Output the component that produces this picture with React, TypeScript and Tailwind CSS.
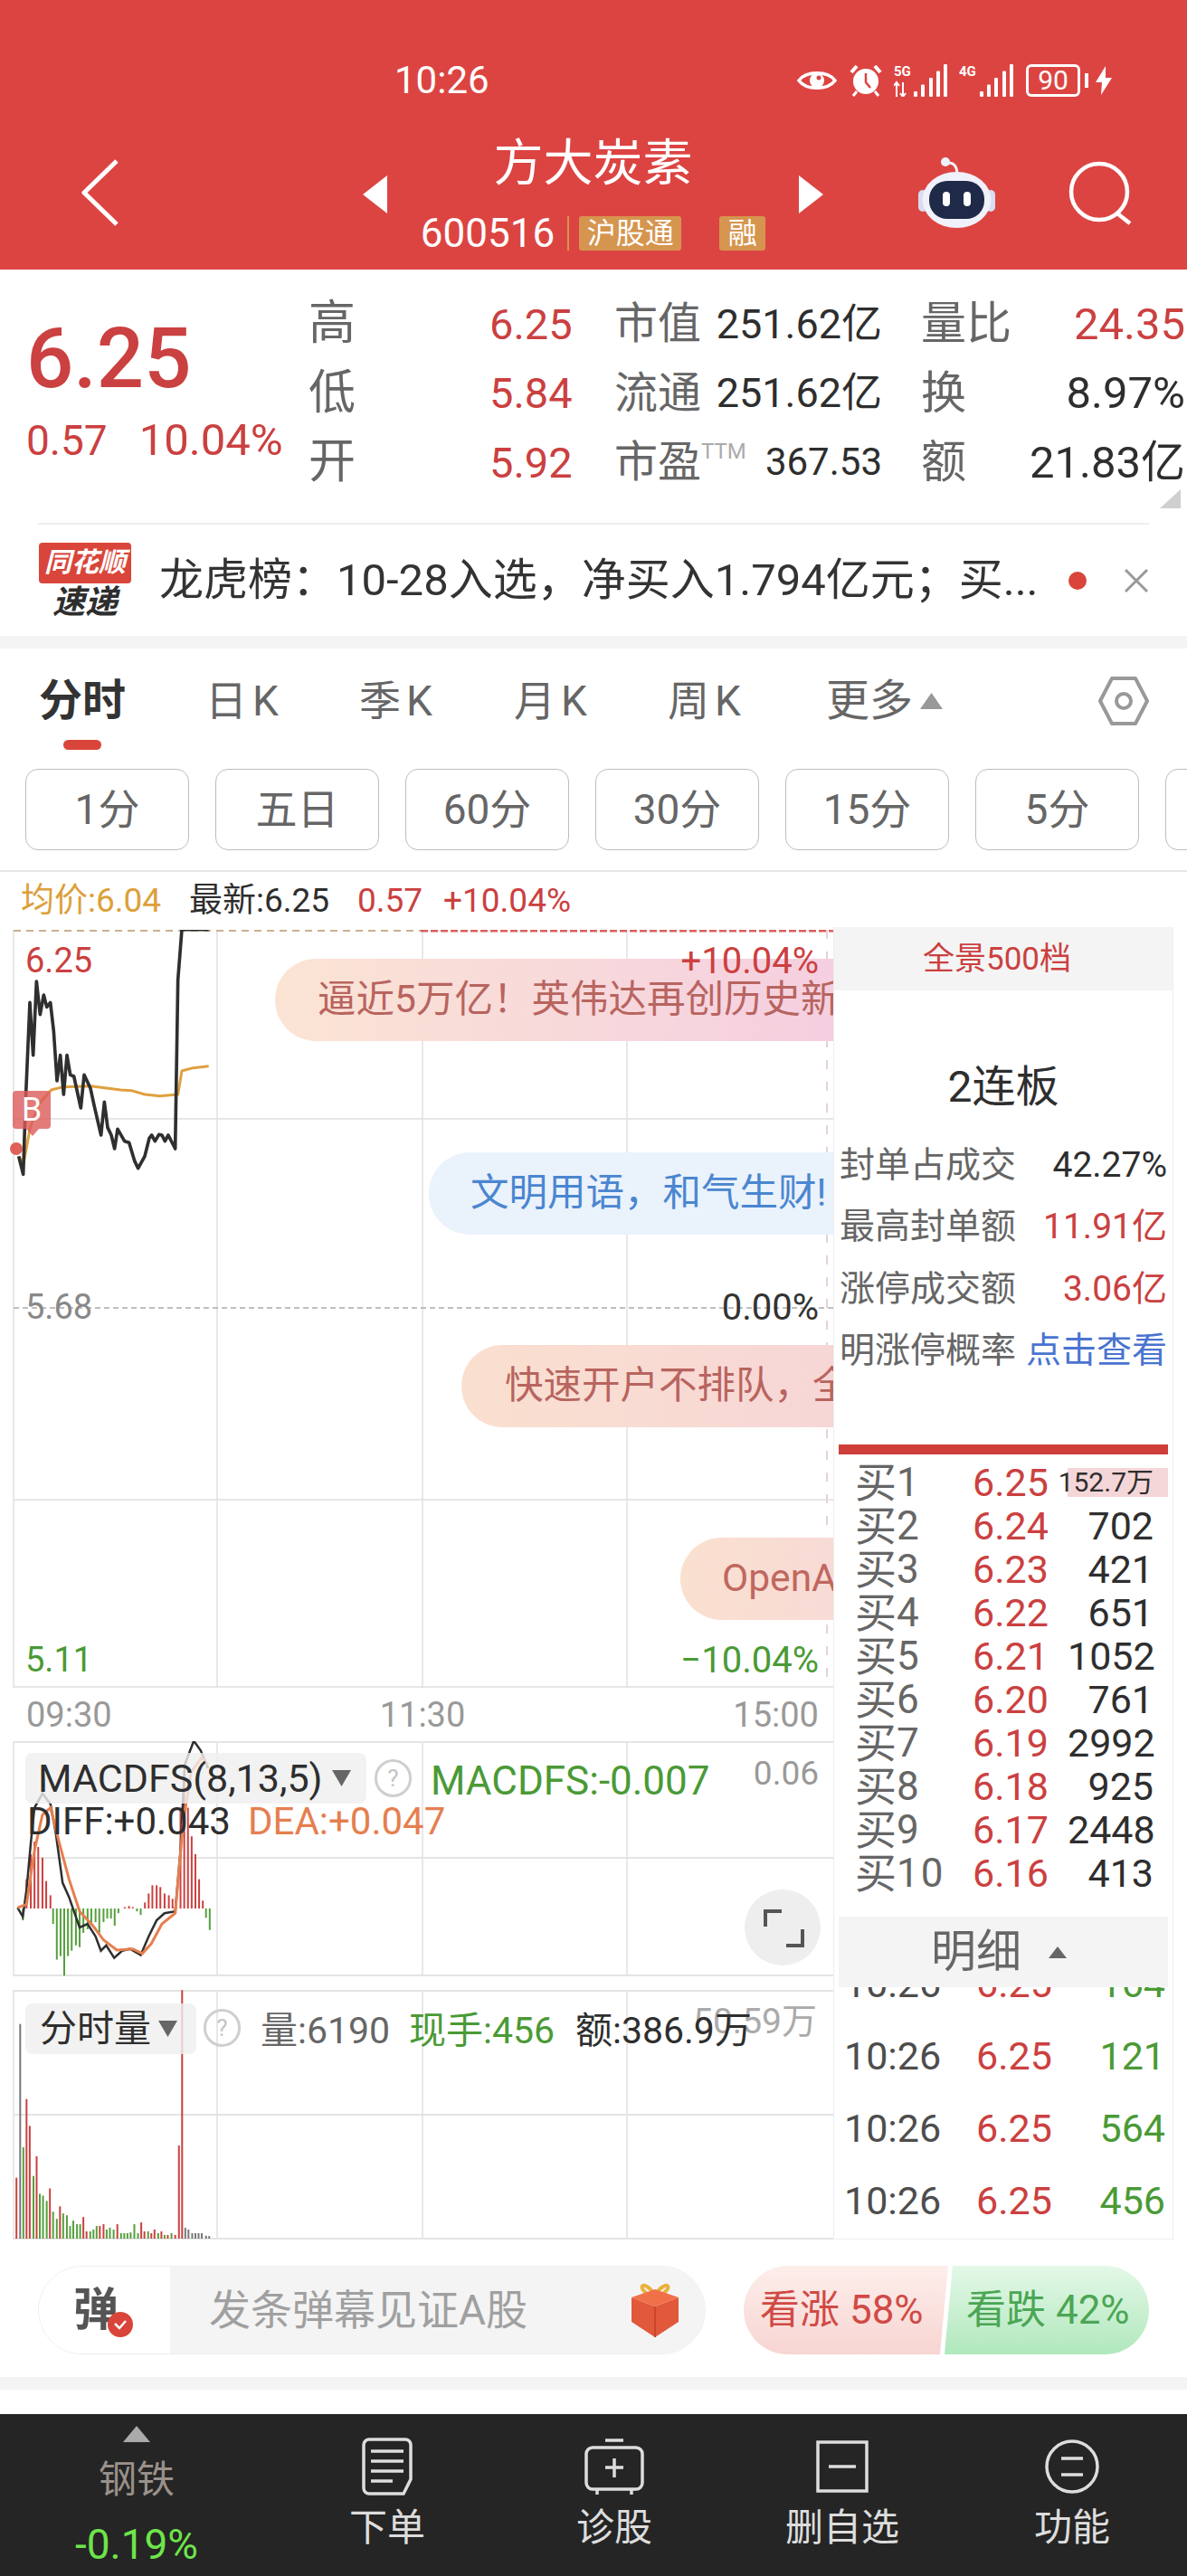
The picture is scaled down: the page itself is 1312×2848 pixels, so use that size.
import React from "react";

type P = [number, number];
const path = (pts: P[], sx = 1, sy = 1, oy = 0) =>
  pts.map(([x, y], i) => `${i ? "L" : "M"}${(x / sx).toFixed(1)} ${(y / sy + oy).toFixed(1)}`).join(" ");

const PRICE: P[] = [[62,985],[77,1045],[85,800],[99,475],[110,650],[121,405],[133,515],[145,450],[155,490],[167,475],[178,570],[189,735],[200,650],[211,780],[222,650],[233,715],[245,720],[268,825],[279,715],[300,760],[313,820],[335,915],[346,805],[357,890],[369,915],[380,960],[390,895],[413,935],[428,940],[446,1000],[458,1025],[480,985],[495,925],[503,915],[514,935],[527,913],[537,915],[547,935],[558,915],[581,960],[590,400],[603,233],[692,233]];
const AVG: P[] = [[62,985],[78,1010],[100,890],[130,810],[170,765],[210,755],[300,752],[400,765],[435,767],[480,780],[530,785],[590,780],[603,702],[640,692],[692,686]];
const DIFF: P[] = [[33,580],[43,605],[50,530],[58,400],[65,300],[80,260],[95,290],[105,370],[118,510],[130,550],[150,635],[165,625],[180,660],[190,700],[200,685],[215,720],[230,700],[245,695],[265,712],[280,660],[295,615],[310,595],[330,590],[340,420],[348,180],[365,113],[378,140],[392,190]];
const DEA: P[] = [[33,580],[50,570],[65,420],[80,320],[95,300],[110,390],[130,500],[150,590],[175,630],[195,670],[220,698],[250,695],[268,708],[285,680],[305,625],[330,595],[345,340],[360,200],[380,160],[392,180]];
const MACD_BARS: P[] = [[43,615],[50,500],[58,430],[65,395],[72,410],[80,440],[87,505],[95,545],[100,625],[107,725],[114,715],[121,770],[128,715],[135,700],[143,685],[150,690],[157,650],[165,640],[172,630],[180,620],[187,650],[195,620],[202,610],[209,610],[216,630],[223,595],[235,578],[243,575],[250,578],[258,590],[265,600],[273,565],[280,540],[287,517],[295,517],[302,522],[310,540],[318,545],[325,555],[332,580],[340,300],[347,200],[354,300],[361,380],[368,430],[375,500],[382,560],[388,608],[395,642]];
const VOL: [number, number, string][] = [[31,1335,"r"],[38,905,"k"],[44,1250,"g"],[50,1115,"r"],[56,1190,"r"],[63,1330,"g"],[69,1275,"r"],[75,1380,"g"],[81,1385,"g"],[88,1400,"g"],[94,1365,"r"],[100,1430,"g"],[107,1450,"g"],[113,1415,"r"],[119,1435,"g"],[126,1440,"g"],[132,1470,"g"],[138,1455,"g"],[145,1465,"g"],[151,1465,"g"],[157,1445,"r"],[163,1485,"r"],[170,1485,"g"],[176,1480,"g"],[182,1470,"g"],[188,1470,"r"],[195,1465,"r"],[201,1480,"g"],[207,1475,"g"],[214,1480,"g"],[221,1465,"r"],[228,1490,"g"],[234,1490,"g"],[240,1490,"g"],[246,1488,"g"],[253,1465,"g"],[260,1490,"g"],[266,1460,"r"],[272,1485,"r"],[279,1485,"g"],[285,1490,"r"],[291,1480,"r"],[298,1490,"g"],[304,1485,"r"],[310,1495,"g"],[316,1495,"r"],[323,1490,"g"],[330,1495,"r"],[337,1245,"r"],[343,810,"r"],[349,1475,"k"],[355,1480,"k"],[362,1490,"k"],[368,1490,"k"],[374,1490,"k"],[380,1490,"k"],[388,1497,"k"],[394,1498,"k"]];
const RED = "#cb4040", GREEN = "#55a03c", GREY = "#777777";

const GridV = ({ h }: { h: number }) => (
  <>
    {[15, 240, 467, 693].map((x) => (
      <line key={x} x1={x} x2={x} y1={0} y2={h} stroke="#e0e0e0" strokeWidth={1.5} />
    ))}
  </>
);

const Signal = ({ label, xs, dual }: { label: string; xs: number[]; dual?: boolean }) => (
  <svg width="60" height="36" viewBox="0 0 60 36" className="block">
    <text x="0" y="13" fontSize="15" fontWeight="700" fill="#fff" fontFamily="Roboto">{label}</text>
    {dual && <path d="M3 36V20M0 24l3-4 3 4M10 20v16M7 32l3 4 3-4" stroke="#fff" strokeWidth="2" fill="none" />}
    {xs.map((x, i) => (
      <rect key={x} x={x} y={30 - i * 7.5} width="4" height={6 + i * 7.5} rx="1" fill="#fff" />
    ))}
  </svg>
);

const Q = () => (
  <div className="flex h-[42px] w-[41px] items-center justify-center rounded-full border-[3px] border-[#cfcfcf] text-[26px] leading-none text-[#c4c4c4]">?</div>
);

const Bubble = ({ top, left, text, pad, cls }: { top: string; left: string; text: string; pad: string; cls: string }) => (
  <div className={`absolute flex h-[91px] items-center overflow-hidden whitespace-nowrap rounded-l-full text-[42.5px] leading-none ${top} ${left} ${pad} ${cls}`}>{text}</div>
);

const buys: [string, string, string][] = [["买2","6.24","702"],["买3","6.23","421"],["买4","6.22","651"],["买5","6.21","1052"],["买6","6.20","761"],["买7","6.19","2992"],["买8","6.18","925"],["买9","6.17","2448"],["买10","6.16","413"]];

const BuyRow = ({ n, p, children }: { n: string; p: string; children: React.ReactNode }) => (
  <div className="flex h-[48px] items-center pl-[23px] pr-[5px]">
    <div className="flex w-[130px] items-center text-[#666]">
      <span className="text-[46px] leading-none">{n.slice(0, 1)}</span>
      <span className="text-[44px] leading-none tracking-[2px]">{n.slice(1)}</span>
    </div>
    <span className="text-[43px] leading-none text-[#cb4040]">{p}</span>
    <div className="ml-auto w-[111px]">{children}</div>
  </div>
);

const StatRow = ({ l, v, c }: { l: string; v: string; c: string }) => (
  <div className="flex h-[68.5px] items-center justify-between pl-[6px] pr-[6px] text-[39px] leading-none">
    <span className="text-[#666]">{l}</span>
    <span className={c}>{v}</span>
  </div>
);

const QuoteRow = ({ a, b, c, d, e, f, fc }: { a: string; b: string; c: React.ReactNode; d: React.ReactNode; e: string; f: string; fc: string }) => (
  <div className="flex h-[76.5px] items-center leading-none">
    <span className="w-[200px] text-[52px] text-[#666]">{a}</span>
    <span className="w-[139px] text-[47px] text-[#cb4040]">{b}</span>
    <div className="-ml-[1px] flex w-[296px] items-center justify-between">
      <span className="text-[48px] text-[#666]">{c}</span>
      {d}
    </div>
    <div className="ml-[43px] flex w-[292px] items-center justify-between">
      <span className="text-[50px] text-[#666]">{e}</span>
      <span className={`text-[49px] ${fc}`}>{f}</span>
    </div>
  </div>
);

const NavItem = ({ icon, label }: { icon: React.ReactNode; label: string }) => (
  <div className="flex flex-col items-center pt-[26px]">
    <div className="flex h-[64px] items-center justify-center">{icon}</div>
    <span className="mt-[16px] text-[42px] leading-[40px] text-[#dddddd]">{label}</span>
  </div>
);

const TabK = ({ w, c }: { w: string; c: string }) => (
  <div className={`flex items-center gap-[6px] ${w}`}>
    <span>{c}</span>
    <span>K</span>
  </div>
);

export default function App() {
  return (
    <div className="flex h-[2848px] w-[1312px] flex-col overflow-hidden bg-white font-['Roboto','Noto_Sans_CJK_SC',sans-serif]">
      {/* header */}
      <header className="h-[298px] shrink-0 bg-[#dc4442] text-white">
        <div className="flex h-[114px] items-center pt-[64px] leading-none">
          <span className="ml-[436px] w-[105px] whitespace-nowrap text-[42px]">10:26</span>
          <svg width="44" height="28" viewBox="0 0 44 28" className="ml-[340px]">
            <path d="M2 14C10 3 34 3 42 14 34 25 10 25 2 14Z" fill="none" stroke="#fff" strokeWidth="3.5" />
            <circle cx="22" cy="14" r="8" fill="#fff" />
            <circle cx="24" cy="11" r="2.5" fill="#dc4442" />
          </svg>
          <svg width="36" height="36" viewBox="0 0 36 36" className="ml-[14px]">
            <circle cx="18" cy="19" r="14" fill="#fff" />
            <path d="M18 10v10l5 6" stroke="#dc4442" strokeWidth="2.5" fill="none" />
            <path d="M2 9 8 2M34 9 28 2" stroke="#fff" strokeWidth="4" />
            <path d="M8 30 4 35M28 30l4 5" stroke="#fff" strokeWidth="3" />
          </svg>
          <div className="ml-[13px]"><Signal label="5G" dual xs={[22, 30, 39, 47, 55]} /></div>
          <div className="ml-[12px]"><Signal label="4G" xs={[23, 31, 39, 48, 56]} /></div>
          <div className="ml-[14px] flex h-[36px] w-[60px] items-center justify-center rounded-[6px] border-[3px] border-white text-[30px]">90</div>
          <div className="ml-[5px] h-[16px] w-[4px] bg-white" />
          <svg width="18" height="32" viewBox="0 0 18 32" className="ml-[8px]">
            <path d="M11 0 0 18h7L6 32 18 13h-7Z" fill="#fff" />
          </svg>
        </div>
        <div className="flex h-[184px] items-center pb-[20px] pl-[90px] pt-[33px]">
          <svg width="41" height="74" viewBox="0 0 41 74">
            <path d="M39 2 3 37l36 35" fill="none" stroke="#fff" strokeWidth="5" strokeLinejoin="round" />
          </svg>
          <svg width="27" height="42" viewBox="0 0 27 42" className="ml-[270px] mt-[4px]"><path d="M27 0V42L0 21Z" fill="#fff" /></svg>
          <div className="flex w-[455px] flex-col items-center">
            <div className="h-[66px] whitespace-nowrap text-[55px] leading-[66px]">方大炭素</div>
            <div className="mt-[25px] flex h-[40px] items-center leading-none">
              <span className="text-[44px]">600516</span>
              <span className="ml-[14px] h-[38px] w-[2px] bg-[#d6954f]" />
              <span className="ml-[11px] flex h-[38px] w-[113px] items-center justify-center rounded-[3px] bg-[#d6954f] text-[32px]">沪股通</span>
              <span className="ml-[42px] flex h-[38px] w-[51px] items-center justify-center rounded-[3px] bg-[#d6954f] text-[32px]">融</span>
            </div>
          </div>
          <svg width="27" height="42" viewBox="0 0 27 42" className="mt-[4px]"><path d="M0 0V42L27 21Z" fill="#fff" /></svg>
          <svg width="85" height="78" viewBox="0 0 85 78" className="ml-[105px]">
            <circle cx="30" cy="5" r="5" fill="#eef0f8" />
            <path d="M33 6c7 0 9 4 10 11" stroke="#eef0f8" strokeWidth="3" fill="none" />
            <rect x="0" y="36" width="10" height="24" rx="5" fill="#d9dcf0" />
            <rect x="75" y="36" width="10" height="24" rx="5" fill="#d9dcf0" />
            <ellipse cx="42.5" cy="47" rx="38" ry="31" fill="#f0f1fa" />
            <rect x="12" y="26" width="61" height="42" rx="20" fill="#1f2a48" />
            <rect x="27" y="38" width="8" height="16" rx="4" fill="#fff" />
            <rect x="50" y="38" width="8" height="16" rx="4" fill="#fff" />
          </svg>
          <svg width="72" height="72" viewBox="0 0 72 72" className="ml-[80px]">
            <circle cx="35" cy="35" r="31" fill="none" stroke="#fff" strokeWidth="4.5" />
            <path d="M55 59 69 70" stroke="#fff" strokeWidth="4.5" />
          </svg>
        </div>
      </header>

      {/* quote */}
      <section className="relative flex h-[280px] shrink-0">
        <div className="w-[341px] shrink-0 pl-[29px] pt-[53px] text-[#cb4040]">
          <div className="text-[92px] font-medium leading-[92px]">6.25</div>
          <div className="mt-[21px] flex items-center whitespace-nowrap leading-[46px]">
            <span className="text-[46px]">0.57</span>
            <span className="ml-[35px] text-[49px]">10.04%</span>
          </div>
        </div>
        <div className="pt-[22px]">
          <QuoteRow a="高" b="6.25" c="市值" d={<span className="text-[45px] text-[#2e2e2e]">251.62亿</span>} e="量比" f="24.35" fc="text-[#cb4040]" />
          <QuoteRow a="低" b="5.84" c="流通" d={<span className="text-[45px] text-[#2e2e2e]">251.62亿</span>} e="换" f="8.97%" fc="text-[#2e2e2e]" />
          <QuoteRow
            a="开"
            b="5.92"
            c={<span className="flex items-start">市盈<span className="text-[24px] text-[#aaaaaa]">TTM</span></span>}
            d={<span className="text-[42px] text-[#2e2e2e]">367.53</span>}
            e="额"
            f="21.83亿"
            fc="text-[#2e2e2e]"
          />
        </div>
        <svg width="23" height="21" viewBox="0 0 23 21" className="absolute left-[1282px] top-[243px]"><path d="M23 0V21H0Z" fill="#cfcfcf" /></svg>
      </section>
      <div className="mx-[42px] h-[2px] shrink-0 bg-[#eeeeee]" />

      {/* news */}
      <section className="flex h-[123px] shrink-0 items-center pl-[43px]">
        <div className="flex h-[84px] w-[102px] flex-col items-center">
          <div className="flex h-[45px] w-[102px] items-center justify-center whitespace-nowrap rounded-[4px] bg-[#d9453a] text-[30px] font-bold italic leading-none text-white">同花顺</div>
          <div className="mt-[3px] text-[36px] font-bold italic leading-[36px] text-[#2e2e2e]">速递</div>
        </div>
        <span className="ml-[31px] w-[1002px] whitespace-nowrap text-[49px] leading-none text-[#333]">龙虎榜：10-28入选，净买入1.794亿元；买...</span>
        <span className="ml-[3px] h-[20px] w-[20px] rounded-full bg-[#d9453a]" />
        <svg width="28" height="28" viewBox="0 0 28 28" className="ml-[41px]"><path d="M2 2 26 26M26 2 2 26" stroke="#999" strokeWidth="3" /></svg>
      </section>
      <div className="h-[14px] shrink-0 bg-[#f4f4f4]" />

      {/* tabs */}
      <nav className="flex h-[116px] shrink-0 items-center pl-[43px] text-[46px] leading-none text-[#666]">
        <div className="relative w-[184px] text-[48px] font-bold text-[#333]">
          分时
          <span className="absolute left-[27px] top-[67px] h-[11px] w-[42px] rounded-full bg-[#d9453a]" />
        </div>
        <TabK w="w-[170px]" c="日" />
        <TabK w="w-[171px]" c="季" />
        <TabK w="w-[170px]" c="月" />
        <TabK w="w-[175px]" c="周" />
        <div className="flex items-center text-[48px]">
          更多
          <svg width="25" height="18" viewBox="0 0 25 18" className="ml-[8px]"><path d="M12.5 0 25 18H0Z" fill="#999" /></svg>
        </div>
        <svg width="56" height="60" viewBox="0 0 56 60" className="ml-[172px]">
          <path d="M15 5H41L54 30 41 55H15L2 30Z" fill="none" stroke="#999" strokeWidth="4" strokeLinejoin="round" />
          <circle cx="28" cy="30" r="8" fill="none" stroke="#999" strokeWidth="4" />
        </svg>
      </nav>
      <div className="mt-[17px] flex h-[90px] shrink-0 gap-[29px] overflow-hidden pl-[28px]">
        {["1分", "五日", "60分", "30分", "15分", "5分", "1分"].map((t, i) => (
          <div key={i} className="flex h-[90px] w-[181px] shrink-0 items-center justify-center rounded-[14px] border-[1.5px] border-[#bdbdbd] text-[46px] leading-none text-[#666]">{t}</div>
        ))}
      </div>
      <div className="mt-[22px] h-[1.5px] shrink-0 bg-[#e6e6e6]" />

      {/* info line */}
      <div className="flex h-[64.5px] shrink-0 items-center whitespace-nowrap pl-[23px] text-[37px] leading-none">
        <span className="w-[186px] text-[#dca03c]">均价:6.04</span>
        <span className="w-[186px] text-[#2e2e2e]">最新:6.25</span>
        <span className="w-[95px] text-[#cb4040]">0.57</span>
        <span className="text-[#cb4040]">+10.04%</span>
      </div>

      {/* charts + side panel */}
      <div className="flex h-[1448px] shrink-0">
        <div className="w-[921px] shrink-0">
          <div className="relative h-[838px] overflow-hidden">
            <svg width="921" height="838" viewBox="0 0 921 838" className="absolute inset-0">
              <GridV h={838} />
              <path d="M15 1H465" stroke="#c9b08e" strokeWidth="2" strokeDasharray="8 6" />
              <path d="M465 1H921" stroke="#d9605c" strokeWidth="3" strokeDasharray="8 3" />
              <path d="M15 209H921M15 630H921M15 837H921" stroke="#e0e0e0" strokeWidth="1.5" />
              <path d="M15 418H921" stroke="#aaaaaa" strokeWidth="1.5" strokeDasharray="6 4" />
              <path d="M914 0V838" stroke="#e3d3d6" strokeWidth="2" strokeDasharray="10 14" />
            </svg>
            <Bubble top="top-[32px]" left="left-[304px]" pad="w-[617px] pl-[47px]" text="逼近5万亿！英伟达再创历史新高" cls="bg-gradient-to-r from-[#fbe4d4] to-[#f5cfe0] text-[#b8645f]" />
            <Bubble top="top-[246px]" left="left-[474px]" pad="w-[447px] pl-[46px]" text="文明用语，和气生财!" cls="bg-[#eaf2fc] text-[#4a86d0]" />
            <Bubble top="top-[459px]" left="left-[510px]" pad="w-[411px] pl-[48px]" text="快速开户不排队，全程线上" cls="bg-gradient-to-r from-[#fae0cf] to-[#f7d6d6] text-[#b8645f]" />
            <Bubble top="top-[672px]" left="left-[752px]" pad="w-[169px] pl-[46px]" text="OpenAI" cls="bg-gradient-to-r from-[#fae0cf] to-[#f8dbd6] text-[#c0675f]" />
            <svg width="300" height="400" viewBox="0 0 900 1200" className="absolute left-0 top-[-78px]">
              <path d={path(AVG)} fill="none" stroke="#e0a040" strokeWidth="9" strokeLinejoin="round" />
              <path d={path(PRICE)} fill="none" stroke="#2f2f2f" strokeWidth="11" strokeLinejoin="round" />
              <circle cx="54" cy="960" r="21" fill="#d9453a" fillOpacity="0.85" />
            </svg>
            <div className="absolute left-[14px] top-[178px] flex h-[42px] w-[42px] items-center justify-center rounded-[4px] bg-[#dc5a5a]/80 text-[36px] leading-none text-white">
              B
              <span className="absolute left-[15px] top-[42px] h-0 w-0 border-x-[7px] border-t-[8px] border-x-transparent border-t-[#dc5a5a]/80" />
            </div>
            <span className="absolute left-[28px] top-[15px] text-[38px] leading-none text-[#cb4040]">6.25</span>
            <span className="absolute right-[16px] top-[15px] text-[40px] leading-none text-[#cb4040]">+10.04%</span>
            <span className="absolute left-[28px] top-[398px] text-[38px] leading-none text-[#888]">5.68</span>
            <span className="absolute right-[16px] top-[398px] text-[40px] leading-none text-[#333]">0.00%</span>
            <span className="absolute left-[28px] top-[788px] text-[38px] leading-none text-[#4a9a35]">5.11</span>
            <span className="absolute right-[16px] top-[788px] text-[40px] leading-none text-[#4a9a35]">−10.04%</span>
          </div>

          <div className="flex h-[59px] items-center justify-between pl-[29px] pr-[16px] text-[38px] leading-none text-[#999]">
            <span>09:30</span><span>11:30</span><span>15:00</span>
          </div>

          {/* MACD */}
          <div className="relative h-[260px]">
            <svg width="921" height="260" viewBox="0 0 921 260" className="absolute inset-0">
              <GridV h={260} />
              <path d="M15 1H921M15 129H921M15 259H921" stroke="#e4e4e4" strokeWidth="2" />
              {MACD_BARS.map(([x, y], i) => (
                <line key={i} x1={x / 1.704} x2={x / 1.704} y1={185} y2={y / 2.53 - 45} stroke={y < 582 ? RED : GREEN} strokeWidth={2} />
              ))}
              <path d={path(DIFF, 1.704, 2.53, -45)} fill="none" stroke="#2f2f2f" strokeWidth="2.5" />
              <path d={path(DEA, 1.704, 2.53, -45)} fill="none" stroke="#e57f4f" strokeWidth="3" />
            </svg>
            <div className="absolute left-[28px] top-[13px] flex h-[56px] w-[377px] items-center whitespace-nowrap rounded-[8px] bg-[#efefef]/80 pl-[14px] text-[43px] leading-none text-[#2e2e2e]">
              MACDFS(8,13,5)
              <svg width="21" height="18" viewBox="0 0 21 18" className="ml-[10px]"><path d="M0 0H21L10.5 18Z" fill="#666" /></svg>
            </div>
            <div className="absolute left-[414px] top-[20px]"><Q /></div>
            <span className="absolute left-[476px] top-[22px] whitespace-nowrap text-[44px] leading-none text-[#4a9a35]">MACDFS:-0.007</span>
            <span className="absolute right-[16px] top-[17px] text-[37px] leading-none text-[#999]">0.06</span>
            <span className="absolute left-[30px] top-[68px] whitespace-nowrap text-[42px] leading-none text-[#2e2e2e]">DIFF:+0.043</span>
            <span className="absolute left-[274px] top-[68px] whitespace-nowrap text-[42px] leading-none text-[#e57f4f]">DEA:+0.047</span>
            <div className="absolute left-[823px] top-[164px] flex h-[84px] w-[84px] items-center justify-center rounded-full bg-[#eeeeee]">
              <svg width="84" height="84" viewBox="0 0 84 84">
                <path d="M23 41V24H41M64 44V62H46" fill="none" stroke="#555" strokeWidth="4" />
              </svg>
            </div>
          </div>

          {/* volume */}
          <div className="relative mt-[15px] h-[276px]">
            <svg width="921" height="276" viewBox="0 0 921 276" className="absolute inset-0">
              <GridV h={276} />
              <path d="M15 1H921M15 138H921M15 275H921" stroke="#e4e4e4" strokeWidth="2" />
              {VOL.map(([x, y, c], i) => (
                <line key={i} x1={x / 1.704} x2={x / 1.704} y1={275} y2={y / 2.53 - 320} stroke={c === "r" ? RED : c === "g" ? GREEN : GREY} strokeWidth={2} />
              ))}
            </svg>
            <span className="absolute right-[18px] top-[16px] whitespace-nowrap text-[39px] leading-none text-[#aaaaaa]">50.59万</span>
            <div className="absolute left-[28px] top-[15px] flex h-[56px] w-[189px] items-center whitespace-nowrap rounded-[8px] bg-[#efefef]/80 pl-[16px] text-[41px] leading-none text-[#2e2e2e]">
              分时量
              <svg width="21" height="18" viewBox="0 0 21 18" className="ml-[8px]"><path d="M0 0H21L10.5 18Z" fill="#666" /></svg>
            </div>
            <div className="absolute left-[225px] top-[21px]"><Q /></div>
            <span className="absolute left-[288px] top-[25px] whitespace-nowrap text-[41px] leading-none text-[#666]">量:6190</span>
            <span className="absolute left-[452px] top-[25px] whitespace-nowrap text-[41px] leading-none text-[#4a9a35]">现手:456</span>
            <span className="absolute left-[636px] top-[25px] whitespace-nowrap text-[41px] leading-none text-[#2e2e2e]">额:386.9万</span>
          </div>
        </div>

        {/* side panel */}
        <aside className="-mt-[3px] h-[1451px] w-[376px] shrink-0 border-x border-b border-[#eeeeee] bg-white">
          <div className="flex h-[70px] items-center justify-center bg-[#f4f4f4] pr-[14px] text-[35px] leading-none text-[#cb4040]">全景500档</div>
          <div className="mt-[77px] h-[60px] text-center text-[48px] leading-[60px] text-[#2e2e2e]">2连板</div>
          <div className="mt-[22px]">
            <StatRow l="封单占成交" v="42.27%" c="text-[#2e2e2e]" />
            <StatRow l="最高封单额" v="11.91亿" c="text-[#cb4040]" />
            <StatRow l="涨停成交额" v="3.06亿" c="text-[#cb4040]" />
            <StatRow l="明涨停概率" v="点击查看" c="text-[#4a74d0]" />
          </div>
          <div className="ml-[5px] mr-[5px] mt-[69px] h-[11px] bg-[#cf3f3a]" />
          <div className="mt-[7px]">
            <BuyRow n="买1" p="6.25">
              <div className="flex h-[32px] items-center justify-end whitespace-nowrap bg-[#f5d6d8] pr-[16px] text-[30px] leading-none text-[#2e2e2e]">152.7万</div>
            </BuyRow>
            {buys.map(([n, p, v]) => (
              <BuyRow key={n} n={n} p={p}>
                <div className="pr-[16px] text-right text-[43px] leading-none text-[#2e2e2e]">{v}</div>
              </BuyRow>
            ))}
          </div>
          <div className="relative z-10 ml-[5px] mr-[5px] mt-[24px] flex h-[78px] items-center justify-center bg-[#f4f4f4] text-[50px] leading-none text-[#666]">
            <span className="ml-[-10px]">明细</span>
            <svg width="20" height="13" viewBox="0 0 20 13" className="ml-[30px]"><path d="M10 0 20 13H0Z" fill="#666" /></svg>
          </div>
          <div className="h-[278px] overflow-hidden">
            <div className="-mt-[44px]">
              {[["164"], ["121"], ["564"], ["456"]].map(([v], i) => (
                <div key={i} className="flex h-[80px] items-center pl-[11px] pr-[8px] text-[43px] leading-none">
                  <span className="w-[146px] text-[#4d4d4d]">10:26</span>
                  <span className="text-[#cb4040]">6.25</span>
                  <span className="ml-auto text-[#4a9a35]">{v}</span>
                </div>
              ))}
            </div>
          </div>
        </aside>
      </div>

      {/* barrage */}
      <div className="mt-[29px] flex h-[98px] shrink-0 pl-[42px]">
        <div className="flex h-[98px] w-[738px] overflow-hidden rounded-full border-[1.5px] border-[#eeeeee]">
          <div className="relative flex w-[145px] items-center bg-white pl-[38px] text-[50px] font-bold leading-none text-[#555]">
            弹
            <span className="absolute left-[76px] top-[50px] flex h-[28px] w-[28px] items-center justify-center rounded-full bg-[#d9453a]">
              <svg width="16" height="12" viewBox="0 0 16 12"><path d="M2 5 7 10 14 2" fill="none" stroke="#fff" strokeWidth="2.5" /></svg>
            </span>
          </div>
          <div className="flex flex-1 items-center whitespace-nowrap bg-[#f4f4f4] pl-[43px] pr-[26px] text-[46px] leading-none text-[#a0a0a0]">
            发条弹幕见证A股
            <svg width="58" height="62" viewBox="0 0 58 62" className="ml-auto">
              <path d="M29 14C16-4 8 6 22 14M29 14C42-4 50 6 36 14" fill="none" stroke="#e8b23c" strokeWidth="4" />
              <path d="M3 17 29 27 55 17V44L29 61 3 44Z" fill="#e2583a" />
              <path d="M3 17 29 8 55 17 29 27Z" fill="#f0704a" />
              <path d="M29 27V61" stroke="#c9452c" strokeWidth="2" />
            </svg>
          </div>
        </div>
        <div className="ml-[42px] flex h-[98px] w-[448px] overflow-hidden rounded-full">
          <div className="flex w-[226px] items-center whitespace-nowrap bg-gradient-to-b from-[#fdeeeb] to-[#f7d5d2] pl-[18px] text-[44px] leading-none text-[#d04a45] [clip-path:polygon(0_0,100%_0,calc(100%-9px)_100%,0_100%)]">看涨 58%</div>
          <div className="-ml-[4px] flex w-[226px] items-center whitespace-nowrap bg-gradient-to-b from-[#e4f8e8] to-[#b0e8bc] pl-[24px] text-[44px] leading-none text-[#4ba655] [clip-path:polygon(9px_0,100%_0,100%_100%,0_100%)]">看跌 42%</div>
        </div>
      </div>
      <div className="mt-[25px] h-[14px] shrink-0 bg-[#f4f4f4]" />
      <div className="h-[27px] shrink-0" />

      {/* bottom bar */}
      <footer className="grid h-[179px] shrink-0 grid-cols-[302px_252px_250px_254px_254px] bg-[#252525]">
        <div className="flex flex-col items-center pt-[13px] leading-none">
          <svg width="30" height="18" viewBox="0 0 30 18"><path d="M15 0 30 18H0Z" fill="#aaaaaa" /></svg>
          <span className="mt-[20px] h-[44px] text-[42px] leading-[44px] text-[#9a918a]">钢铁</span>
          <span className="mt-[24px] h-[50px] text-[46px] leading-[50px] text-[#6ee54a]">-0.19%</span>
        </div>
        <NavItem
          label="下单"
          icon={
            <svg width="56" height="64" viewBox="0 0 56 64" fill="none" stroke="#dddddd" strokeWidth="3.5">
              <path d="M8 2H48A6 6 0 0 1 54 8V46L46 62H8A6 6 0 0 1 2 56V8A6 6 0 0 1 8 2Z" />
              <path d="M10 15H46M10 26H46M10 37H46M10 48H34" />
            </svg>
          }
        />
        <NavItem
          label="诊股"
          icon={
            <svg width="66" height="64" viewBox="0 0 66 64" fill="none" stroke="#dddddd" strokeWidth="3.5">
              <path d="M23 3H43" />
              <rect x="2" y="11" width="62" height="46" rx="7" />
              <path d="M33 23V44M23 33H43M14 57V63M52 57V63" />
            </svg>
          }
        />
        <NavItem
          label="删自选"
          icon={
            <svg width="58" height="58" viewBox="0 0 58 58" fill="none" stroke="#dddddd" strokeWidth="3.5">
              <rect x="2" y="2" width="54" height="54" />
              <path d="M14 29H44" />
            </svg>
          }
        />
        <NavItem
          label="功能"
          icon={
            <svg width="60" height="60" viewBox="0 0 60 60" fill="none" stroke="#dddddd" strokeWidth="3.5">
              <circle cx="30" cy="30" r="28" />
              <path d="M18 21H42M18 39H42" />
            </svg>
          }
        />
      </footer>
    </div>
  );
}
